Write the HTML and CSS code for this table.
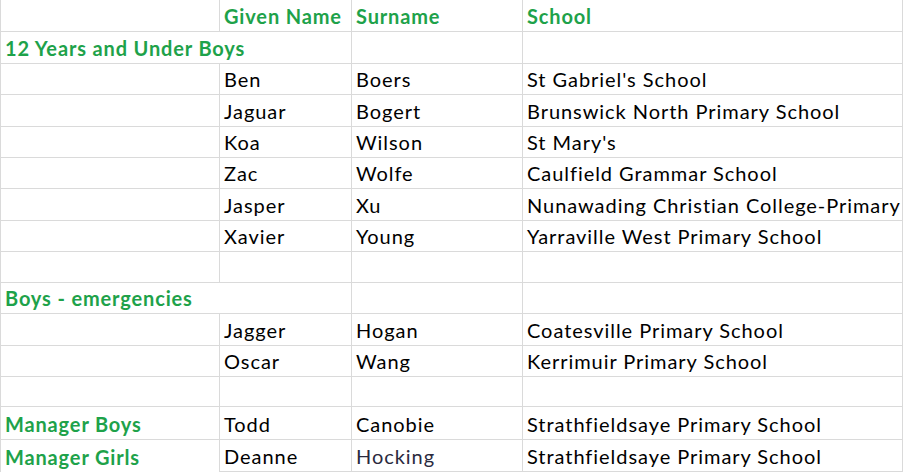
FILE: index.html
```html
<!DOCTYPE html>
<html>
<head>
<meta charset="utf-8">
<link rel="stylesheet" href="styles.css">
</head>
<body>
<div class="sheet">
  <div class="c"></div><div class="c hd">Given Name</div><div class="c hd">Surname</div><div class="c hd">School</div>
  <div class="c s2 grp">12 Years and Under Boys</div><div class="c"></div><div class="c"></div>
  <div class="c"></div><div class="c">Ben</div><div class="c">Boers</div><div class="c">St Gabriel's School</div>
  <div class="c"></div><div class="c">Jaguar</div><div class="c">Bogert</div><div class="c">Brunswick North Primary School</div>
  <div class="c"></div><div class="c">Koa</div><div class="c">Wilson</div><div class="c">St Mary's</div>
  <div class="c"></div><div class="c">Zac</div><div class="c">Wolfe</div><div class="c">Caulfield Grammar School</div>
  <div class="c"></div><div class="c">Jasper</div><div class="c">Xu</div><div class="c">Nunawading Christian College-Primary</div>
  <div class="c"></div><div class="c">Xavier</div><div class="c">Young</div><div class="c">Yarraville West Primary School</div>
  <div class="c"></div><div class="c"></div><div class="c"></div><div class="c"></div>
  <div class="c s2 grp">Boys - emergencies</div><div class="c"></div><div class="c"></div>
  <div class="c"></div><div class="c">Jagger</div><div class="c">Hogan</div><div class="c">Coatesville Primary School</div>
  <div class="c"></div><div class="c">Oscar</div><div class="c">Wang</div><div class="c">Kerrimuir Primary School</div>
  <div class="c"></div><div class="c"></div><div class="c"></div><div class="c"></div>
  <div class="c grp">Manager Boys</div><div class="c">Todd</div><div class="c">Canobie</div><div class="c">Strathfieldsaye Primary School</div>
  <div class="c grp nb">Manager Girls</div><div class="c">Deanne</div><div class="c dim">Hocking</div><div class="c">Strathfieldsaye Primary School</div>
</div>
</body>
</html>
```
FILE: styles.css
```css
html, body {
  margin: 0;
  padding: 0;
  background: #ffffff;
}
.sheet {
  display: grid;
  grid-template-columns: 219px 132px 171px 380px;
  grid-template-rows: 32px 32px 31px 32px 31px 31px 32px 31px 31px 31px 32px 31px 30px 33px 32px;
  border-left: 1px solid #dadada;
  width: 902px;
  font-family: Lato, "Open Sans", sans-serif;
  font-size: 20px;
  letter-spacing: 0.95px;
  color: #000;
}
.c {
  box-sizing: border-box;
  border-right: 1px solid #dadada;
  border-bottom: 1px solid #dadada;
  display: flex;
  align-items: flex-end;
  padding: 0 0 3px 4px;
  line-height: 24px;
  white-space: nowrap;
  overflow: hidden;
}
.s2 { grid-column: span 2; }
.hd, .grp {
  color: #1ea24a;
  font-weight: 700;
  letter-spacing: 0.85px;
}
.nb { border-bottom: none; }
.dim { color: #2a2a3e; }
```
